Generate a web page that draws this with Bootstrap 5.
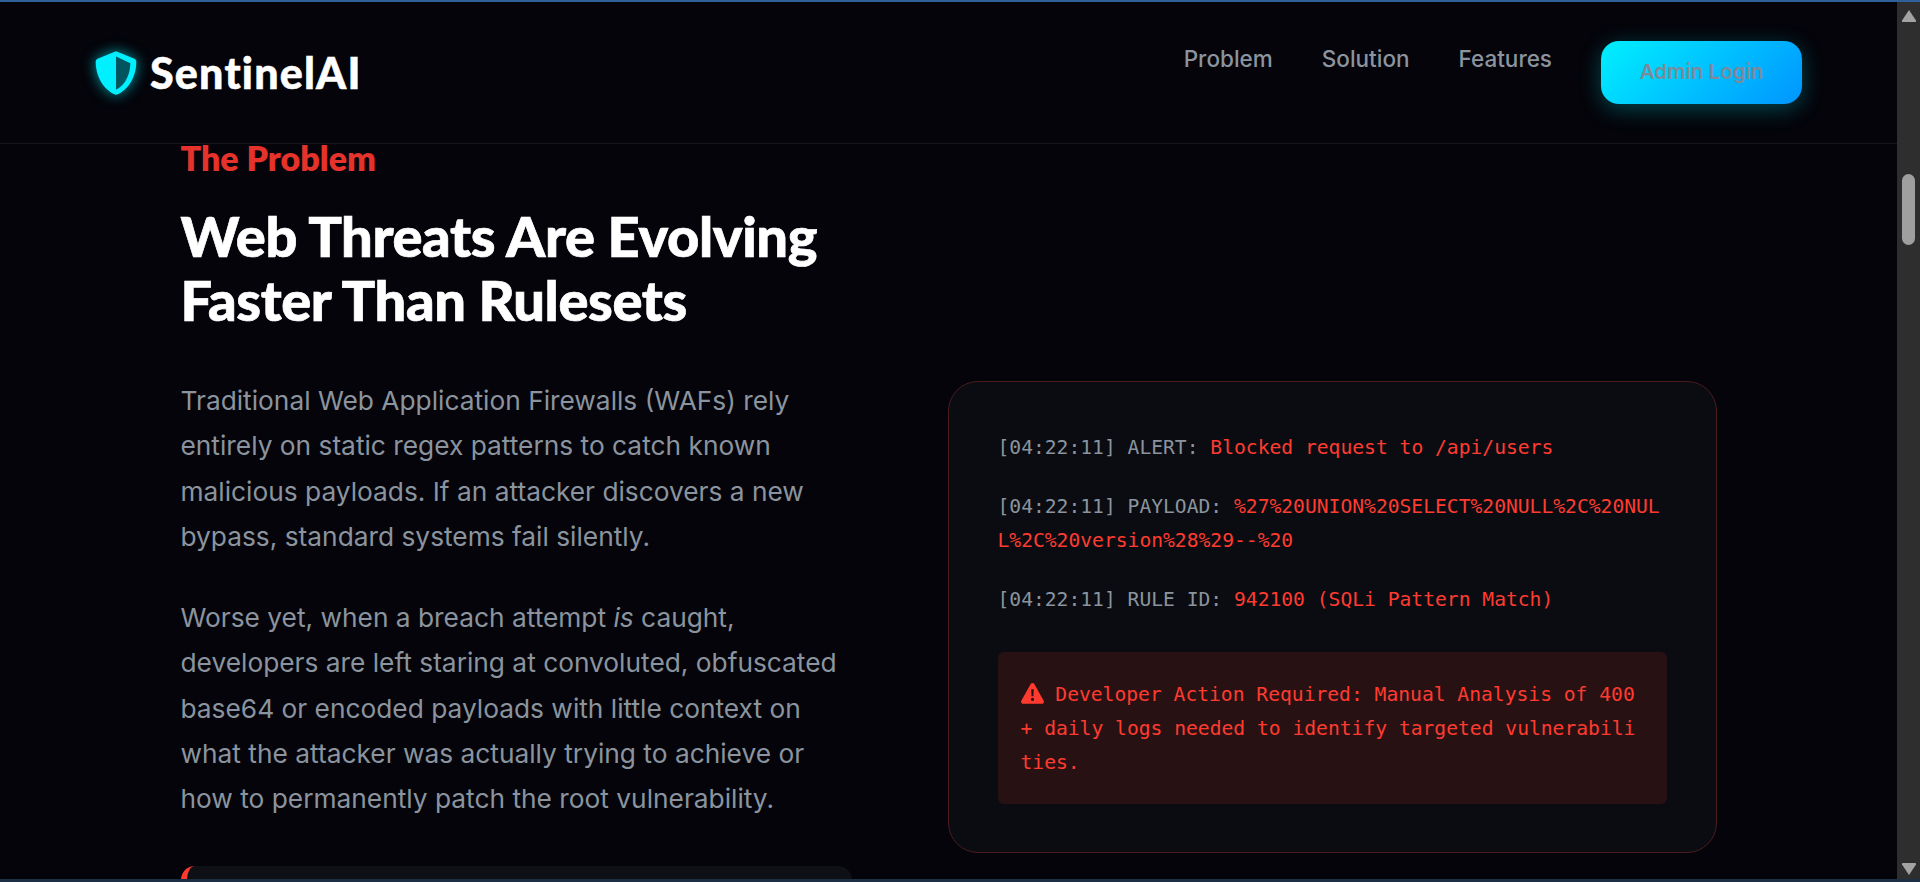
<!DOCTYPE html>
<html lang="en">
<head>
    <meta charset="UTF-8">
    <meta name="viewport" content="width=device-width, initial-scale=1.0">
    <title>SentinelAI</title>
    <link href="https://cdn.jsdelivr.net/npm/bootstrap@5.3.0/dist/css/bootstrap.min.css" rel="stylesheet">
    <style>
        html, body { height: 100%; overflow: hidden; }
        body { background: #04040a; font-family: "Inter", "Liberation Sans", sans-serif; color: #8b949e; }
        .top-line { height: 2px; background: #2f6099; }
        .bottom-line { height: 3px; background: #1c2f44; }
        .shell { height: 877px; }
        .page-area { min-width: 0; overflow: hidden; }
        .rail { width: 23px; background: #2e2e2e; }
        .rail-arrow { width: 14px; height: 12px; fill: #a3a3a3; }
        .rail-thumb { width: 13px; height: 71px; margin-top: 152px; background: #9f9f9f; border-radius: 7px; }
        .site-nav { height: 142px; padding: 0 95px 0 96px; border-bottom: 1px solid #15161b; }
        .logo-link { gap: 11px; margin-left: -3px; }
        .logo-shield { width: 46px; height: 46px; filter: drop-shadow(0 0 7px rgba(0, 240, 255, .65)); }
        .logo-text { font-family: "Lato", sans-serif; font-weight: 900; font-size: 43px; color: #fff; letter-spacing: 1.2px; line-height: 1; -webkit-text-stroke: .5px #fff; }
        .nav-items { gap: 49px; margin: 0 49px 28px 0; padding: 0; list-style: none; }
        .nav-items a { font-size: 22.5px; font-weight: 500; color: #8b949e; text-decoration: none; }
        .login-btn { width: 201px; height: 63px; border: 0; border-radius: 18px; font-size: 20.5px; font-weight: 600; color: #7f8a99; background: linear-gradient(135deg, #00f0ff, #0095ff); box-shadow: 0 5px 22px rgba(0, 240, 255, .28); }
        .content-grid { display: grid; grid-template-columns: 671px 769px; column-gap: 96px; width: 1536px; margin: 0 auto; }
        .eyebrow { font-family: "Lato", sans-serif; font-weight: 800; font-size: 34px; line-height: 1; color: #e5322b; margin: -3px 0 0; }
        .main-title { font-family: "Lato", sans-serif; font-weight: 900; font-size: 56px; line-height: 64px; color: #fff; margin: 29px 0 46px; letter-spacing: -.4px; -webkit-text-stroke: .7px #fff; }
        .body-copy { font-size: 26.3px; line-height: 45.3px; color: #8b949e; margin: 0 0 36px; }
        .callout-stub { height: 120px; margin-top: 44px; background: #0f1015; border-left: 6px solid #ff3b30; border-radius: 14px; }
        .log-card { margin-top: 237px; height: 472px; padding: 48.5px 49px; background: #0a0c11; border: 1px solid #4a1c1e; border-radius: 30px; font-family: "DejaVu Sans Mono", monospace; font-size: 19.65px; line-height: 34px; }
        .log-line { margin: 0 0 25px; color: #8b949e; word-break: break-all; }
        .log-red { color: #ff3b30; }
        .action-box { margin-top: 35px; padding: 26px 23px 0; height: 152px; background: #281113; border-radius: 6px; color: #ff3b30; word-break: break-all; }
        .warn-icon { width: 23px; height: 21px; fill: #ff3b30; vertical-align: -3px; }
    </style>
</head>
<body>
    <div class="top-line"></div>
    <div class="shell d-flex">
        <div class="page-area flex-grow-1">
            <nav class="site-nav d-flex align-items-center">
                <a class="logo-link d-flex align-items-center text-decoration-none" href="#">
                    <svg class="logo-shield" viewBox="0 0 24 24">
                        <path fill="#00f0ff" d="M12 .6 2.400 4.600c-.6.300-1 .8-1 1.500 0 5.500 2.300 13.300 9.700 17 .6.300 1.200.300 1.800 0 7.400-3.700 9.700-11.500 9.700-17 0-.7-.4-1.200-1-1.500z"/>
                        <path fill="#00555f" d="M12 3.400v17.300c5.400-2.800 7.300-8.500 7.500-13.800z"/>
                    </svg>
                    <span class="logo-text">SentinelAI</span>
                </a>
                <ul class="nav-items d-flex ms-auto">
                    <li><a href="#">Problem</a></li>
                    <li><a href="#">Solution</a></li>
                    <li><a href="#">Features</a></li>
                </ul>
                <button class="login-btn" type="button">Admin Login</button>
            </nav>
            <main class="content-grid">
                <section>
                    <h4 class="eyebrow">The Problem</h4>
                    <h2 class="main-title">Web Threats Are Evolving Faster Than Rulesets</h2>
                    <p class="body-copy">Traditional Web Application Firewalls (WAFs) rely entirely on static regex patterns to catch known malicious payloads. If an attacker discovers a new bypass, standard systems fail silently.</p>
                    <p class="body-copy">Worse yet, when a breach attempt <em>is</em> caught, developers are left staring at convoluted, obfuscated base64 or encoded payloads with little context on what the attacker was actually trying to achieve or how to permanently patch the root vulnerability.</p>
                    <div class="callout-stub"></div>
                </section>
                <section>
                    <div class="log-card">
                        <p class="log-line">[04:22:11] ALERT: <span class="log-red">Blocked request to /api/users</span></p>
                        <p class="log-line">[04:22:11] PAYLOAD: <span class="log-red">%27%20UNION%20SELECT%20NULL%2C%20NULL%2C%20version%28%29--%20</span></p>
                        <p class="log-line">[04:22:11] RULE ID: <span class="log-red">942100 (SQLi Pattern Match)</span></p>
                        <div class="action-box">
                            <svg class="warn-icon" viewBox="0 0 24 22"><path fill-rule="evenodd" d="M12 0c.8 0 1.500.4 1.900 1.100l9.800 17.400c.8 1.500-.2 3.300-1.900 3.300H2.200c-1.700 0-2.700-1.800-1.900-3.300L10.100 1.100C10.500.4 11.200 0 12 0zm-1.300 6.500.3 7.500h2l.3-7.500zM12 15.400a1.700 1.700 0 1 0 0 3.400 1.700 1.700 0 0 0 0-3.400z"/></svg>
                            Developer Action Required: Manual Analysis of 400+ daily logs needed to identify targeted vulnerabilities.
                        </div>
                    </div>
                </section>
            </main>
        </div>
        <div class="rail d-flex flex-column align-items-center flex-shrink-0">
            <svg class="rail-arrow mt-2" viewBox="0 0 14 12"><path d="M7 0l7 10.500q.3 1.500-1 1.500H1q-1.300 0-1-1.500z"/></svg>
            <div class="rail-thumb"></div>
            <svg class="rail-arrow mt-auto mb-1" viewBox="0 0 14 12"><path d="M7 12l7-10.500q.3-1.500-1-1.500H1q-1.300 0-1 1.500z"/></svg>
        </div>
    </div>
    <div class="bottom-line"></div>
    <script src="https://cdn.jsdelivr.net/npm/bootstrap@5.3.0/dist/js/bootstrap.bundle.min.js"></script>
</body>
</html>
